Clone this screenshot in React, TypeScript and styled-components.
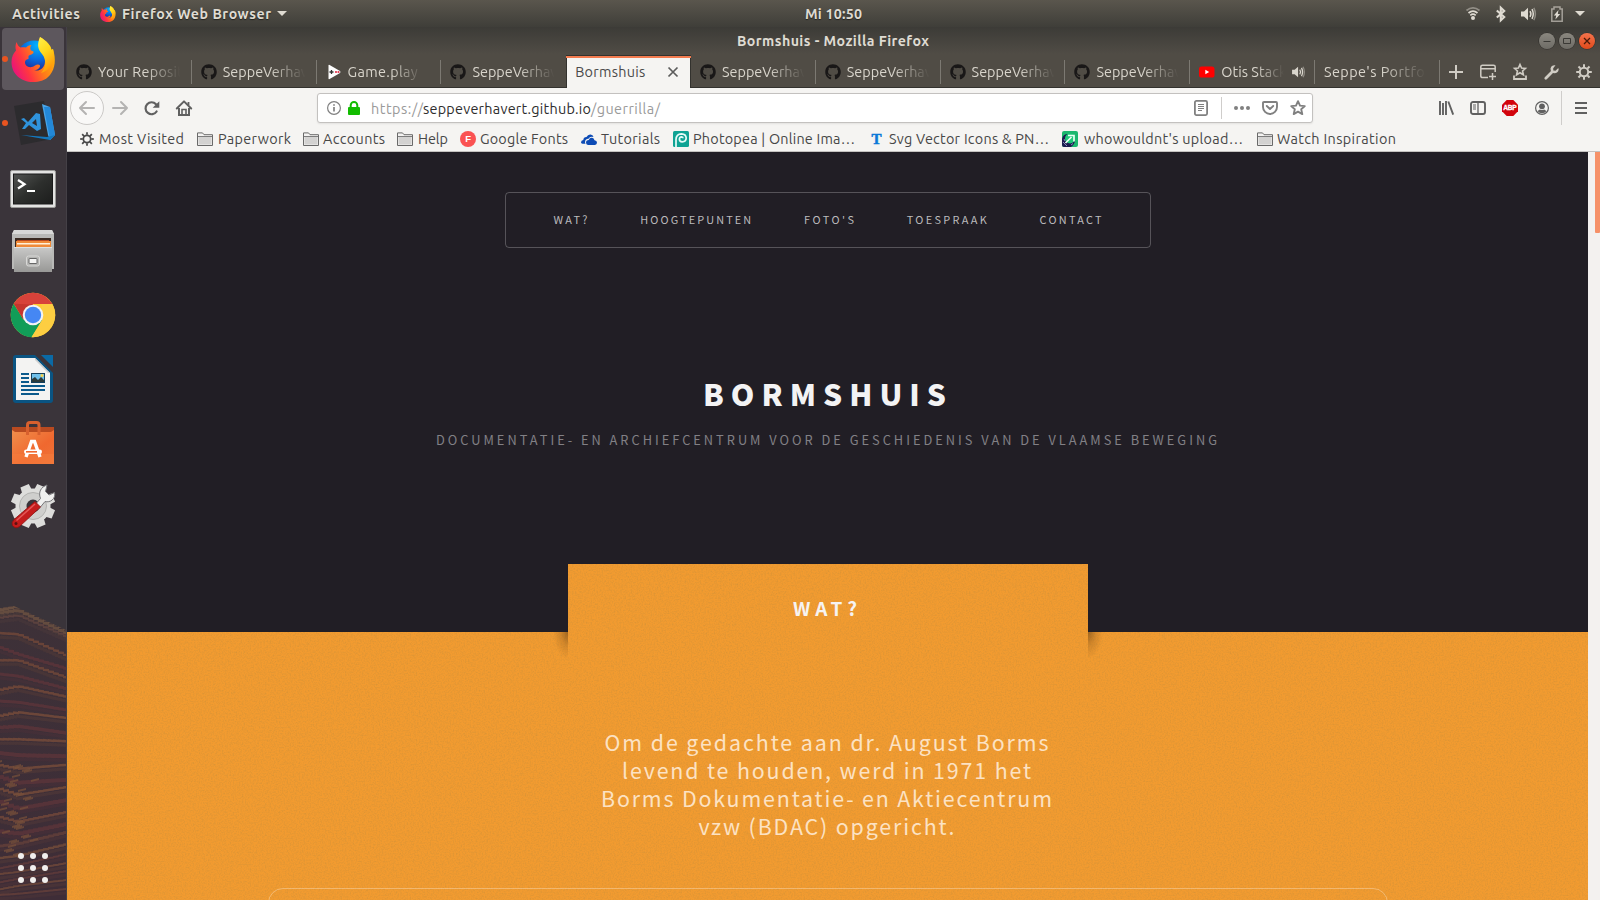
import React, { useLayoutEffect, useRef, useState } from "react";
import styled, { createGlobalStyle, css } from "styled-components";
import { FaGithub } from "react-icons/fa";

const uiFont = `"Ubuntu", "Noto Sans", "Open Sans", sans-serif`;
const pageFont = `"Source Sans Pro", "Noto Sans CJK SC", sans-serif`;

const GlobalStyle = createGlobalStyle`
  * { box-sizing: border-box; }
  html, body { margin: 0; padding: 0; overflow: hidden; }
  svg { display: block; flex: none; overflow: visible; }
`;

/* ---------- text fitted to a column width by tracking ---------- */

const FitBox = styled.span<{ $w: number }>`
  display: block;
  flex: none;
  width: ${(p) => p.$w}px;
  white-space: pre;
`;

function Fit({ w, children }: { w: number; children: string }) {
  const ref = useRef<HTMLSpanElement>(null);
  const [tracking, setTracking] = useState(0);
  useLayoutEffect(() => {
    const el = ref.current;
    if (!el) return;
    const natural = el.getBoundingClientRect().width;
    setTracking((w - natural) / Math.max(1, children.length - 1));
  }, []);
  return (
    <FitBox $w={w}>
      <span ref={ref} style={{ letterSpacing: tracking }}>{children}</span>
    </FitBox>
  );
}

/* ---------- desktop shell ---------- */

const Desktop = styled.div`
  width: 1600px;
  height: 900px;
  display: flex;
  flex-direction: column;
  overflow: hidden;
  background: #3a353a;
  font-family: ${uiFont};
`;

const TopBar = styled.header`
  height: 27px;
  flex: none;
  display: grid;
  grid-template-columns: 805px 1fr auto;
  align-items: center;
  padding-right: 15px;
  background: linear-gradient(#5a564d, #3f3e39);
  color: #dfdbd2;
  font-size: 14.2px;
  font-weight: 700;
  line-height: 26px;
  text-shadow: 0 1px 1px rgba(0, 0, 0, 0.5);
`;

const TopLeft = styled.div`
  display: flex;
  align-items: center;
  padding-left: 12px;
`;

const AppMenu = styled.div`
  display: flex;
  align-items: center;
  gap: 6px;
  margin-left: 20px;
`;

const Tray = styled.div`
  display: flex;
  align-items: center;
  color: #dfdbd2;
`;

const Body = styled.div`
  flex: 1;
  display: flex;
  min-height: 0;
`;

const Dock = styled.nav`
  width: 67px;
  flex: none;
  position: relative;
  display: flex;
  flex-direction: column;
  background: #3a343a;
  border-right: 1px solid #444046;
`;

const DockItem = styled.div<{ $active?: boolean; $drop?: number; $lift?: number }>`
  width: 62px;
  height: 62px;
  margin: 1px 0 1px 2px;
  padding-top: ${(p) => p.$drop ?? 0}px;
  padding-bottom: ${(p) => p.$lift ?? 0}px;
  display: flex;
  align-items: center;
  justify-content: center;
  position: relative;
  border-radius: 4px;
  ${(p) => p.$active && css`background: #5d575d;`}
`;

const RunDot = styled.i`
  position: absolute;
  left: 0;
  top: 28px;
  width: 6px;
  height: 6px;
  border-radius: 50%;
  background: #e95420;
`;

const Wallpaper = styled.svg`
  position: absolute;
  left: 0;
  bottom: 0;
`;

const AppGrid = styled.div`
  position: relative;
  margin: auto 0 17px 18px;
  display: grid;
  grid-template-columns: repeat(3, 6px);
  gap: 6px;
`;

const GridDot = styled.i`
  width: 6px;
  height: 6px;
  border-radius: 50%;
  background: #f1efed;
`;

/* ---------- browser window ---------- */

const Window = styled.main`
  flex: 1;
  min-width: 0;
  display: flex;
  flex-direction: column;
`;

const Chrome = styled.div`
  height: 61px;
  flex: none;
  background: linear-gradient(#3c3b37 0, #504c45 27px, #504c45 100%);
  border-bottom: 1px solid #33322e;
`;

const TitleBar = styled.div`
  height: 28px;
  display: flex;
  align-items: center;
  padding: 0 5px 0 670px;
  color: #dfdbd2;
  font-size: 14.2px;
  font-weight: 700;
  line-height: 27px;
`;

const WindowButtons = styled.div`
  display: flex;
  gap: 4px;
  margin-left: auto;
`;

const WinBtn = styled.div<{ $close?: boolean }>`
  width: 16px;
  height: 16px;
  border-radius: 50%;
  background: ${(p) => (p.$close ? "linear-gradient(#f4734c, #df4a1b)" : "linear-gradient(#8a877f, #6e6c66)")};
  box-shadow: 0 0 0 0.6px #2f2e2a;
`;

const TabStrip = styled.div`
  height: 32px;
  display: flex;
  align-items: stretch;
`;

const Tab = styled.div<{ $active?: boolean; $line?: boolean }>`
  width: 124.8px;
  flex: none;
  display: flex;
  align-items: center;
  gap: 6px;
  padding: 2px 0 0 9px;
  position: relative;
  color: ${(p) => (p.$active ? "#4a4a4a" : "#d9d5cc")};
  font-size: 14.4px;
  line-height: 20px;
  ${(p) =>
    p.$active &&
    css`
      height: 33px;
      margin-top: 0;
      padding: 0 0 2px 9px;
      background: #f5f4f2;
      border-top: 3px solid #f37b4f;
      border-image: linear-gradient(#33322e 0 1px, #f37b4f 1px 3px, #f5f4f2 3px) 3 0 0 0;
      box-shadow: inset 1px 0 #33322e, inset -1px 0 #33322e;
    `}
  ${(p) =>
    p.$line &&
    css`
      background: linear-gradient(#7c7972, #7c7972) right 0 top 5px / 1px 24px no-repeat;
    `}
`;

const TabText = styled.div`
  mask-image: linear-gradient(90deg, #000 55%, transparent 97%);
`;

const StripTools = styled.div`
  flex: 1;
  display: flex;
  align-items: center;
  justify-content: space-between;
  padding: 2px 8px 0 9px;
  color: #d0ccc4;
`;

const NavBar = styled.div`
  height: 38px;
  flex: none;
  display: flex;
  align-items: center;
  padding: 2px 13px 0 3px;
  background: #f5f4f2;
  color: #606060;
`;

const BackBtn = styled.div`
  width: 34px;
  height: 34px;
  border: 1px solid #cbc9c7;
  border-radius: 50%;
  background: #f9f8f7;
  display: grid;
  place-items: center;
  color: #b4b3b2;
`;

const NavIcons = styled.div`
  display: flex;
  align-items: center;
  gap: 16px;
  margin-left: 8px;
`;

const UrlBar = styled.div`
  width: 996px;
  height: 30px;
  margin-left: 125px;
  display: flex;
  align-items: center;
  padding: 0 6px 0 9px;
  background: #fff;
  border: 1px solid #c3c1bf;
  border-radius: 3px;
  box-shadow: 0 1px 2px rgba(0, 0, 0, 0.08);
  color: #808080;
`;

const UrlText = styled.div`
  display: flex;
  margin: 1px 0 0 11px;
  font-size: 14.4px;
  line-height: 20px;
  color: #9a9a9a;
  b { font-weight: 400; color: #2e2e2e; }
`;

const UrlActions = styled.div`
  display: flex;
  align-items: center;
  gap: 12px;
  margin-left: auto;
`;

const VLine = styled.i<{ $h: number }>`
  width: 1px;
  height: ${(p) => p.$h}px;
  background: #cfcdcb;
`;

const RightTools = styled.div`
  display: flex;
  align-items: center;
  gap: 16px;
  margin-left: auto;
`;

const MenuSlot = styled.div`
  display: flex;
  align-items: center;
  gap: 13px;
  margin-left: -4px;
`;

const Bookmarks = styled.div`
  height: 26px;
  flex: none;
  display: flex;
  align-items: center;
  padding: 1px 0 0 13px;
  background: #f5f4f2;
  border-bottom: 1px solid #c4c2c0;
  color: #474747;
  font-size: 14.4px;
  line-height: 22px;
`;

const Bookmark = styled.div<{ $gap: number; $after: number }>`
  display: flex;
  align-items: center;
  gap: ${(p) => p.$gap}px;
  margin-right: ${(p) => p.$after}px;
`;

/* ---------- web page ---------- */

const Viewport = styled.div`
  flex: 1;
  min-height: 0;
  display: flex;
`;

const Scrollbar = styled.div`
  width: 12px;
  flex: none;
  background: #f3f1ef;
  display: flex;
  justify-content: flex-end;
`;

const Thumb = styled.div`
  width: 5px;
  height: 81px;
  background: #f69168;
  border-radius: 0 0 1px 1px;
`;

const Page = styled.div`
  width: 1521px;
  flex: none;
  display: flex;
  flex-direction: column;
  font-family: ${pageFont};
  overflow: hidden;
`;

const Hero = styled.section`
  height: 480px;
  flex: none;
  display: flex;
  flex-direction: column;
  align-items: center;
  padding-top: 40px;
  background: #211e25;
`;

const SiteNav = styled.nav`
  width: 646px;
  height: 56px;
  display: flex;
  align-items: center;
  justify-content: space-between;
  padding: 0 48px 2px 48px;
  border: 1px solid rgba(255, 255, 255, 0.24);
  border-radius: 4px;
  color: #bcbbbd;
  font-size: 10.9px;
  line-height: 20px;
`;

const HeroTitle = styled.h1`
  margin: 123px 6px 0 0;
  font-size: 30px;
  line-height: 44px;
  font-weight: 900;
  color: #f3f3f4;
`;

const HeroSub = styled.p`
  margin: 15px 2px 0 0;
  font-size: 12.8px;
  line-height: 20px;
  font-weight: 400;
  color: #828085;
`;

const Section = styled.section`
  flex: 1;
  min-height: 0;
  position: relative;
  display: flex;
  flex-direction: column;
  align-items: center;
  background: #f29b30;
`;

const Grain = styled.svg`
  position: absolute;
  inset: 0;
  width: 100%;
  height: 100%;
`;

const SectionHead = styled.header`
  position: relative;
  width: 520px;
  height: 94px;
  flex: none;
  margin-top: -68px;
  padding-top: 29px;
  display: flex;
  justify-content: center;
  background: #f29b30;
`;

const Shade = styled.i<{ $right?: boolean }>`
  position: absolute;
  top: 68px;
  width: 15px;
  height: 26px;
  ${(p) => (p.$right ? "left: 100%;" : "right: 100%;")}
  background: radial-gradient(
    ellipse 15px 27px at ${(p) => (p.$right ? "0" : "100%")} 0,
    rgba(60, 35, 10, 0.45),
    rgba(60, 35, 10, 0.16) 50%,
    transparent
  );
`;

const SectionTitle = styled.h2`
  position: relative;
  margin: 0 5px 0 0;
  font-size: 19px;
  line-height: 30px;
  font-weight: 700;
  color: #f6f3f2;
`;

const Lead = styled.div`
  position: relative;
  display: flex;
  flex-direction: column;
  align-items: center;
  margin: 70px 2px 0 0;
  font-size: 21.4px;
  line-height: 28px;
  font-weight: 400;
  color: #fce2c3;
`;

const Panel = styled.div`
  position: relative;
  width: 1120px;
  height: 60px;
  flex: none;
  margin-top: 48px;
  border: 1.5px solid rgba(255, 255, 255, 0.3);
  border-radius: 15px;
`;

/* ---------- icons ---------- */

const FirefoxIcon = ({ size }: { size: number }) => (
  <svg width={size} height={size} viewBox="0 0 45 45">
    <defs>
      <linearGradient id="ffBody" x1="0" y1="0.7" x2="1" y2="0.2">
        <stop offset="0" stopColor="#e8127d" />
        <stop offset="0.28" stopColor="#ff3740" />
        <stop offset="0.55" stopColor="#ff7a1a" />
        <stop offset="1" stopColor="#ffc400" />
      </linearGradient>
      <linearGradient id="ffTail" x1="0" y1="0" x2="0.4" y2="1">
        <stop offset="0" stopColor="#fff14a" />
        <stop offset="0.5" stopColor="#ffd91c" />
        <stop offset="1" stopColor="#ff9a0a" />
      </linearGradient>
      <radialGradient id="ffGlobe" cx="0.6" cy="0.15" r="0.9">
        <stop offset="0" stopColor="#00b4ff" />
        <stop offset="0.5" stopColor="#0a68dc" />
        <stop offset="1" stopColor="#2b1479" />
      </radialGradient>
    </defs>
    <circle cx="23" cy="20" r="16.5" fill="url(#ffGlobe)" />
    <path fill="url(#ffBody)" d="M5.5 5C6.5 8 8 10 9.5 10.5C11 10 13 10 15 10.5C16.5 9 18 8.2 20.5 8C19 10 19 12 20 13.5C21.5 14 23 14.3 22.5 15.5C22 17.5 18 18 17.5 19L17.5 22C14 22.5 13.5 25 14.5 27.5C16.5 31 21 31 24 28.6C26 27 28 27 29 28.5C29.4 30.5 27 33 23 33.5C31 34.5 34 29 34 24C34 16 27 14 29 0C36 4 40 9 40.5 13L42 12C45 22 44.5 31 39 38C34 44 28 45 22 45C10 45 0.5 37 0.5 25C0.5 20 2.5 16 5 13.5C4 10 4.600 8 5.500 5Z" />
    <path fill="url(#ffTail)" d="M29 0C26 7 26.500 12 31 17C36 23 35 31 30 36C38 34 44 26 43 18L42 12L40.500 13C40 9 36 4 29 0Z" />
  </svg>
);

const CodeIcon = () => (
  <svg width="42" height="44" viewBox="0 0 42 44">
    <path d="M0 5L30 0L38 38L7 44Z" fill="#2c2b2e" />
    <path d="M28 3L36 6L41 34L36 39L34 34Z" fill="#4aa5e8" />
    <path d="M30 6L36 6L41 34L36 39Z" fill="#2388d8" />
    <path d="M7 34L33 36L41 34L36 39Z" fill="#1478be" />
    <path d="M7 18L10 17L14 21L22 12L26 13L27 28L23 30L15 24L11 28L8 28L12 22ZM22 18L18 22L23 25Z" fill="#2f93dc" fillRule="evenodd" />
  </svg>
);

const TerminalIcon = () => (
  <svg width="46" height="38" viewBox="0 0 46 38">
    <defs>
      <linearGradient id="tmScreen" x1="0" y1="0" x2="1" y2="1">
        <stop offset="0" stopColor="#525452" />
        <stop offset="0.5" stopColor="#2d2f2d" />
        <stop offset="1" stopColor="#1c1d1c" />
      </linearGradient>
    </defs>
    <rect x="0.500" y="0.500" width="45" height="37" rx="1.500" fill="#e3e3e2" stroke="#9a9a98" />
    <rect x="3.500" y="4" width="39" height="30" fill="url(#tmScreen)" stroke="#1a1a1a" />
    <path d="M8 10L14.500 14.200L8 18.500" fill="none" stroke="#fff" strokeWidth="2.300" />
    <path d="M17 21H25" stroke="#fff" strokeWidth="2" />
  </svg>
);

const FilesIcon = () => (
  <svg width="42" height="43" viewBox="0 0 42 43">
    <defs>
      <linearGradient id="flBox" x1="0" y1="0" x2="0" y2="1">
        <stop offset="0" stopColor="#c9c9c8" />
        <stop offset="1" stopColor="#989896" />
      </linearGradient>
    </defs>
    <path d="M2 0H40L42 4V39H0V4Z" fill="#b9b9b7" />
    <path d="M2 0H40L42 4H0Z" fill="#d8d8d7" />
    <rect x="3" y="8" width="36" height="12" fill="#3a2a22" />
    <rect x="5" y="10" width="32" height="2" fill="#bb4a20" />
    <rect x="4" y="11" width="35" height="9" fill="#f08a38" />
    <rect x="5" y="13" width="33" height="1.500" fill="#fff0d8" />
    <path d="M2 17H40V42H2Z" fill="url(#flBox)" />
    <rect x="2" y="17" width="38" height="1" fill="#e2e2e1" />
    <rect x="14.500" y="26" width="13" height="10" rx="2" fill="#b6b6b4" stroke="#d8d8d6" />
    <rect x="17" y="28.500" width="8" height="5" rx="0.500" fill="#f4f4f3" stroke="#666" />
  </svg>
);

const ChromeIcon = () => (
  <svg width="45" height="45" viewBox="0 0 45 45">
    <circle cx="22" cy="22" r="22.300" fill="#fc3" />
    <g transform="translate(-0.500 -0.500)">
      <path d="M22.500 22.500L3.200 11.350A22.300 22.300 0 0 1 41.800 11.500H22.500Z" fill="#d8423a" />
      <path d="M3.200 11.350A22.300 22.300 0 0 0 21 44.750L31.500 27.500L22.500 22.500L13 27Z" fill="#119d58" />
      <path d="M41.800 11.500A22.300 22.300 0 0 1 21 44.750L32 27.500L31 11.500Z" fill="#fdce42" />
      <path d="M3.200 11.350L12.800 27L22 12Z" fill="#c5352e" />
      <circle cx="22.500" cy="22.500" r="10.300" fill="#f3f3f3" />
      <circle cx="22.500" cy="22.500" r="8.200" fill="#4587f3" />
    </g>
  </svg>
);

const WriterIcon = () => (
  <svg width="40" height="48" viewBox="0 0 40 48">
    <path d="M3 0H22L40 18V45Q40 48 37 48H3Q0 48 0 45V3Q0 0 3 0Z" fill="#0a5482" />
    <path d="M28 0H40V12Z" fill="#0b6aa5" />
    <path d="M3 3H22L37 18V45H3Z" fill="#f3f3f2" />
    <path d="M22 3L37 18H35L22 5Z" fill="#cfcfce" />
    <path d="M8 19H16M8 23H16M8 27H16M8 31H32M8 35H32M8 39H26" stroke="#0b5a8c" strokeWidth="2" />
    <rect x="18.500" y="18.500" width="13" height="9" fill="#6fc0ea" stroke="#14405c" />
    <path d="M19 27V24L22 22L25 25L28 22L31 25V27Z" fill="#2c3b3b" />
    <circle cx="29" cy="20.500" r="1.500" fill="#f5d04a" />
  </svg>
);

const SoftwareIcon = () => (
  <svg width="42" height="44" viewBox="0 0 42 44">
    <defs>
      <linearGradient id="swBag" x1="0" y1="0" x2="1" y2="1">
        <stop offset="0" stopColor="#f08f4c" />
        <stop offset="0.600" stopColor="#f0682f" />
        <stop offset="1" stopColor="#ee7437" />
      </linearGradient>
    </defs>
    <path d="M0 6H42V12H0Z" fill="#b84a20" />
    <path d="M0 9L3 11H39L42 9V43H0Z" fill="url(#swBag)" />
    <path d="M15.500 14V4Q15.500 1.500 18 1.500H24.500Q27 1.500 27 4V14" fill="none" stroke="#d8602e" strokeWidth="3" />
    <path d="M0 33H42V43H0Z" fill="#f57d3e" opacity="0.500" />
    <path d="M14 36L19.500 20.500H22.500L28 36" fill="none" stroke="#fff" strokeWidth="3.400" />
    <rect x="12" y="28.500" width="18" height="4.500" rx="2.200" fill="#fff" />
    <rect x="14" y="30" width="11" height="1.600" fill="#f0682f" />
  </svg>
);

const teeth = Array.from({ length: 8 }, (_, i) => i * 45 + 22.5);

const ToolsIcon = () => (
  <svg width="44" height="44" viewBox="0 0 44 44">
    {teeth.map((a) => (
      <path key={a} d="M16.500 9L17.500 0H26.500L27.500 9Z" fill="#dcdcda" transform={`rotate(${a} 22 22)`} />
    ))}
    <circle cx="22" cy="22" r="17.500" fill="#dededc" />
    <circle cx="22" cy="22" r="13.500" fill="#cfcfcd" stroke="#b3b3b1" strokeWidth="1" />
    <circle cx="22" cy="22" r="6.500" fill="#39343a" />
    <path d="M22 23L29.500 14.500C27 8 30 3 36 1L34.500 7.500L38 11L43.500 8.500C45 15 39 19 34 17.500L27 26Z" fill="#f0f0ef" stroke="#77777a" strokeWidth="1" />
    <path d="M24 17.500L29.500 23L8.500 42.500Q4.500 45.500 1.500 41.500Q0 39 3 35.500Z" fill="#c41c1c" stroke="#8d1010" strokeWidth="0.800" />
    <path d="M24 20L5.500 36.500" stroke="#e45858" strokeWidth="1.500" />
    <circle cx="5" cy="39.500" r="1.500" fill="#5c1010" />
  </svg>
);

const WifiIcon = () => (
  <svg width="14" height="13" viewBox="0 0 14 13" fill="none" stroke="currentColor" strokeWidth="1.700">
    <path d="M0.500 3.500Q7 -1.800 13.500 3.500" opacity="0.450" />
    <path d="M2.500 6Q7 2.200 11.500 6M4.300 8.300Q7 6 9.700 8.300" />
    <circle cx="7" cy="11" r="2" fill="currentColor" stroke="none" />
  </svg>
);

const BluetoothIcon = () => (
  <svg width="10" height="16" viewBox="0 0 10 16" fill="none" stroke="currentColor" strokeWidth="2.100">
    <path d="M0.800 4.500L8.200 11L4.800 14.200V1.800L8.200 5L0.800 11.500" />
  </svg>
);

const VolumeIcon = ({ small }: { small?: boolean }) => (
  <svg width={small ? 13 : 15} height={small ? 12 : 14} viewBox="0 0 15 14" fill="none" stroke="currentColor" strokeWidth="1.500">
    <path d="M0 4.500H3L7 0.800V13.200L3 9.500H0Z" fill="currentColor" stroke="none" />
    <path d="M9 4.200Q10.800 7 9 9.800M11 2.200Q13.500 7 11 11.800" />
    <path d="M12.800 0.800Q16 7 12.800 13.200" opacity="0.450" />
  </svg>
);

const BatteryIcon = () => (
  <svg width="12" height="16" viewBox="0 0 12 16">
    <path d="M3 1H9V3H11.200V15.200H0.800V3H3Z" fill="none" stroke="currentColor" strokeWidth="1.500" opacity="0.600" />
    <path d="M7.500 4L2.800 9.500H5.200L4.400 13.500L9.200 8H6.800Z" fill="currentColor" />
  </svg>
);

const Caret = () => (
  <svg width="10" height="5" viewBox="0 0 10 5"><path d="M0 0H10L5 5Z" fill="currentColor" /></svg>
);

const Github = () => <FaGithub size={16} color="#191717" />;

const GamePlay = () => (
  <svg width="16" height="16" viewBox="0 0 16 16">
    <path d="M2.500 1.500Q2.500 0.500 3.600 1L14 7Q15 8 14 9L3.600 15Q2.500 15.500 2.500 14.500Z" fill="#fff" />
    <path d="M3.500 8H7.500M5.500 6V10" stroke="#333" strokeWidth="1.300" />
    <circle cx="10" cy="8" r="1.100" fill="#e03048" /><circle cx="12.500" cy="8" r="1.100" fill="#e03048" />
  </svg>
);

const YouTube = () => (
  <svg width="16" height="16" viewBox="0 0 16 16">
    <rect x="0" y="2.500" width="15.500" height="11" rx="2.600" fill="#f00" />
    <path d="M6.300 5.700V10.300L10.200 8Z" fill="#fff" />
  </svg>
);

const PlusIcon = () => (
  <svg width="14" height="14" viewBox="0 0 14 14" stroke="currentColor" strokeWidth="2"><path d="M7 0V14M0 7H14" /></svg>
);

const WindowPlus = () => (
  <svg width="16" height="16" viewBox="0 0 16 16" fill="none" stroke="currentColor" strokeWidth="1.500">
    <path d="M8 13.500H2.500Q0.800 13.500 0.800 12V2.800Q0.800 1.300 2.500 1.300H13.500Q15.200 1.300 15.200 2.800V8M1 4.800H15M12.500 9V16M9 12.500H16" />
  </svg>
);

const starPath = "M8 1.200L10 5.600L14.800 6.100L11.200 9.300L12.300 14.100L8 11.600L3.700 14.100L4.800 9.300L1.200 6.100L6 5.600Z";

const StarTray = () => (
  <svg width="14" height="16" viewBox="0 0 14 16" fill="none" stroke="currentColor">
    <path d={starPath} strokeWidth="2" transform="translate(0.600 -0.500) scale(0.800)" />
    <path d="M1 11.500V15H13V11.500" strokeWidth="1.800" />
  </svg>
);

const WrenchIcon = () => (
  <svg width="15" height="15" viewBox="0 0 15 15">
    <path d="M1.800 13.200L8 7" stroke="currentColor" strokeWidth="2.800" strokeLinecap="round" />
    <path d="M11.500 0.300Q7.500 -0.200 6.500 3.500Q6.500 7.500 10 8.300Q14 8.500 14.700 4.500L14.300 3L11.500 5.700L9.300 5.500L9.200 3.300Z" fill="currentColor" />
  </svg>
);

const GearIcon = ({ size }: { size: number }) => (
  <svg width={size} height={size} viewBox="0 0 16 16" fill="none" stroke="currentColor">
    <circle cx="8" cy="8" r="4.200" strokeWidth="2" />
    {[0, 45, 90, 135, 180, 225, 270, 315].map((a) => (
      <path key={a} d="M8 0.200V3.200" strokeWidth="2" transform={`rotate(${a} 8 8)`} />
    ))}
  </svg>
);

const ArrowIcon = ({ flip }: { flip?: boolean }) => (
  <svg width="16" height="14" viewBox="0 0 16 14" fill="none" stroke="#b4b3b2" strokeWidth="2" strokeLinecap="round" strokeLinejoin="round">
    <path d={flip ? "M1 7H15M9 1L15 7L9 13" : "M15 7H1M7 1L1 7L7 13"} />
  </svg>
);

const ReloadIcon = () => (
  <svg width="16" height="15" viewBox="0 0 16 15">
    <path d="M12.600 10.500A6 6 0 1 1 12 3.200" fill="none" stroke="currentColor" strokeWidth="2.200" strokeLinecap="round" />
    <path d="M15.300 0.200V6.800H8.700Z" fill="currentColor" />
  </svg>
);

const HomeIcon = () => (
  <svg width="16" height="16" viewBox="0 0 16 16" fill="none" stroke="currentColor" strokeWidth="2">
    <path d="M0.800 8.500L8 1.400L15.200 8.500" strokeLinecap="round" strokeLinejoin="round" />
    <path d="M3 8V15H13V8" />
    <path d="M6 14V9.500H10V14" strokeWidth="1.600" />
    <path d="M12.500 2V5" strokeWidth="1.800" />
  </svg>
);

const InfoIcon = () => (
  <svg width="14" height="14" viewBox="0 0 14 14" fill="none" stroke="currentColor">
    <circle cx="7" cy="7" r="6.400" strokeWidth="1.200" />
    <path d="M7 6V10.500M7 3.200V4.800" strokeWidth="1.700" />
  </svg>
);

const LockIcon = () => (
  <svg width="12" height="14" viewBox="0 0 12 14">
    <path d="M2.700 7V4.300A3.300 3.300 0 0 1 9.300 4.300V7" fill="none" stroke="#12bc00" strokeWidth="2" />
    <rect x="0" y="6" width="12" height="8" rx="1" fill="#12bc00" />
  </svg>
);

const ReaderIcon = () => (
  <svg width="15" height="16" viewBox="0 0 15 16" fill="none" stroke="currentColor">
    <rect x="0.900" y="0.900" width="12.200" height="14.200" rx="1.500" strokeWidth="1.800" />
    <path d="M4 4.500H10M4 6.500H10M4 8.500H10M4 10.500H8" strokeWidth="1" />
  </svg>
);

const DotsIcon = () => (
  <svg width="16" height="4" viewBox="0 0 16 4" fill="currentColor">
    <circle cx="2" cy="2" r="2" /><circle cx="8" cy="2" r="2" /><circle cx="14" cy="2" r="2" />
  </svg>
);

const PocketIcon = () => (
  <svg width="16" height="14" viewBox="0 0 16 14" fill="none" stroke="currentColor" strokeWidth="1.900" strokeLinecap="round" strokeLinejoin="round">
    <path d="M2 1H14Q15 1 15 2V6A7 7 0 0 1 1 6V2Q1 1 2 1Z" />
    <path d="M4.800 5L8 8L11.200 5" />
  </svg>
);

const StarIcon = () => (
  <svg width="16" height="16" viewBox="0 0 16 16" fill="none" stroke="currentColor" strokeWidth="1.900" strokeLinejoin="round">
    <path d={starPath} />
  </svg>
);

const LibraryIcon = () => (
  <svg width="15" height="14" viewBox="0 0 15 14" stroke="currentColor" strokeWidth="1.900">
    <path d="M1 0V14M4 2V14M7 0V14M9.300 0.500L14.200 13.700" />
  </svg>
);

const SidebarIcon = () => (
  <svg width="16" height="14" viewBox="0 0 16 14" fill="none" stroke="currentColor">
    <rect x="1" y="1" width="14" height="12" rx="2" strokeWidth="1.900" />
    <path d="M8 1V13" strokeWidth="1.300" />
    <path d="M3 4H6M3 6H6M3 8H6" strokeWidth="1" />
  </svg>
);

const AbpText = styled.text`
  font: 700 6.6px "Liberation Sans", sans-serif;
`;

const AbpIcon = () => (
  <svg width="16" height="16" viewBox="0 0 16 16">
    <path d="M4.700 0H11.300L16 4.700V11.300L11.300 16H4.700L0 11.300V4.700Z" fill="#d2040c" />
    <AbpText x="8" y="10.400" textAnchor="middle" textLength="13.500" fill="#fff" stroke="#fff" strokeWidth="0.300">ABP</AbpText>
  </svg>
);

const AccountIcon = () => (
  <svg width="15" height="14" viewBox="-1 0 15 14">
    <circle cx="7" cy="7" r="6.400" fill="none" stroke="currentColor" strokeWidth="1.200" />
    <circle cx="7" cy="5.300" r="2.900" fill="currentColor" />
    <path d="M2.600 10.200Q4 8.600 5 8.400Q7 9.800 9 8.400Q10 8.600 11.400 10.200Q9.800 12.200 7 12.200T2.600 10.200Z" fill="currentColor" />
  </svg>
);

const MenuIcon = () => (
  <svg width="12" height="12" viewBox="0 0 12 12" stroke="currentColor" strokeWidth="1.900"><path d="M0 1H12M0 6H12M0 11H12" /></svg>
);

const FolderIcon = () => (
  <svg width="16" height="14" viewBox="0 0 16 14">
    <path d="M0.500 13.500V0.900H5.500L7 2.700H15.500V13.500Z" fill="#f3f2f1" stroke="#6a6a6a" />
    <path d="M1.500 5H14.500V12.500H1.500Z" fill="#d3d2d1" />
    <path d="M1 4.500H15" stroke="#7d7d7d" />
  </svg>
);

const FIconText = styled.text`
  font: 700 9.5px "Liberation Sans", sans-serif;
`;

const FontsIcon = () => (
  <svg width="16" height="16" viewBox="0 0 16 16">
    <circle cx="8" cy="8" r="8" fill="#fa5252" />
    <FIconText x="8.200" y="11.400" textAnchor="middle" fill="#fff">F</FIconText>
  </svg>
);

const CloudIcon = () => (
  <svg width="16" height="11" viewBox="0 0 16 11" fill="#0d4bb5">
    <path d="M0 8.500Q0 6.300 2.300 6Q2.500 3 5.500 3Q6.800 0.300 9.500 0.500Q12 0.800 12.500 3Q9 1.800 7.500 4.800Q4 4.800 4 8.500L4.500 9.800H1.500Q0 9.500 0 8.500Z" />
    <path d="M5 8.600Q5 6.200 7.800 6Q8.600 3.500 11 3.800Q13 4 13.500 6.300Q16 6.600 16 8.800Q15.800 10.800 14 10.900H7Q5 10.700 5 8.600Z" />
  </svg>
);

const PhotopeaIcon = () => (
  <svg width="16" height="16" viewBox="0 0 16 16">
    <rect width="16" height="16" rx="1.500" fill="#0fa394" />
    <path d="M3 16V8.500Q3.200 3 8.500 2.800Q13 3 13.200 7Q13 10.800 9.300 10.900Q6.300 10.700 6.400 8Q6.600 5.800 8.600 5.800Q10 6 9.900 7.300" fill="none" stroke="#e6fbf8" strokeWidth="1.700" />
  </svg>
);

const TIconText = styled.text`
  font: 700 15px "Liberation Serif", serif;
`;

const TIcon = () => (
  <svg width="11" height="16" viewBox="0 0 11 16">
    <TIconText x="5.500" y="13" textAnchor="middle" fill="#0a78d8" stroke="#0a78d8" strokeWidth="0.500">T</TIconText>
  </svg>
);

const UploadIcon = () => (
  <svg width="16" height="16" viewBox="0 0 16 16">
    <rect width="16" height="16" rx="2" fill="#1bb76e" />
    <path d="M0 8Q1 3 6 3L9 3L13 9Q13 13 9 16H2Q0 16 0 14Z" fill="#1c1c50" />
    <circle cx="8" cy="7.500" r="5" fill="#1fc878" />
    <path d="M3.500 12L9.500 6M6 4.500H12V10.500" stroke="#e9fff4" strokeWidth="1.700" fill="none" />
    <path d="M1 11L5 15M2 8L3 10M9 14L11 12.500" stroke="#b9b9e8" strokeWidth="0.700" />
  </svg>
);

/* ---------- dune wallpaper behind the dock ---------- */

const ridges: [number, number, number, string, number][] = [
  [3, 0, 24, "#735844", 3], [6, 4, 28, "#6b5141", 3], [11, 9, 31, "#604440", 2],
  [27, 28, 50, "#734838", 2.5], [42, 48, 63, "#5d343a", 3], [54, 54, 72, "#734838", 2.500],
  [68, 70, 83, "#5d343a", 3], [83, 80, 91, "#764a38", 2.500], [95, 96, 104, "#5d343a", 3],
  [109, 106, 112, "#784c39", 2.500], [121, 120, 127, "#5d343a", 3.500], [133, 133, 135, "#784c39", 2.500],
  [147, 149, 150, "#5d343a", 4], [160, 163, 159, "#784c39", 2.500], [172, 177, 174, "#5d343a", 4],
  [184, 189, 181, "#784c39", 2.500], [197, 203, 194, "#5d343a", 4], [212, 216, 206, "#744939", 2.500],
  [226, 228, 218, "#5d343a", 4], [240, 238, 226, "#64403a", 3], [252, 250, 238, "#744c39", 2.500],
  [262, 259, 248, "#623b3a", 2], [268, 266, 257, "#704839", 2], [276, 273, 265, "#623b3a", 2],
  [283, 280, 274, "#704839", 2], [289, 288, 283, "#66403a", 2],
];

/* a ridge descends in short slabs, each a few pixels long */
const ridgePath = (a: number, b: number, c: number, step: number) => {
  let d = "";
  for (let x = -2; x < 68; x += step) {
    const y = x < 16 ? a + ((b - a) * x) / 16 : b + ((c - b) * (x - 16)) / 50;
    d += `M${x} ${y.toFixed(1)}l${step + 1} ${c > b ? 0.6 : -0.6}`;
  }
  return d;
};

const clumps = Array.from({ length: 42 }, (_, i) => {
  const row = Math.floor(i / 3);
  return { x: ((i * 17) % 23) + (row % 3) * 4 - 6 + (i % 3) * 4, y: 156 + row * 7 + ((i * 5) % 6) };
});

const Dunes = () => (
  <Wallpaper width="66" height="294" viewBox="0 0 66 294">
    <defs>
      <linearGradient id="duneFill" x1="0" y1="0" x2="0" y2="1">
        <stop offset="0" stopColor="#3d3138" />
        <stop offset="1" stopColor="#3e2d37" />
      </linearGradient>
      <clipPath id="duneClip"><path d="M0 2L14 0L66 24V294H0Z" /></clipPath>
    </defs>
    <g clipPath="url(#duneClip)">
      <rect width="66" height="294" fill="url(#duneFill)" />
      {ridges.map(([a, b, c, color, w], i) => (
        <g key={i} fill="none" stroke={color}>
          <path d={ridgePath(a, b, c, 5)} strokeWidth={w} opacity="0.800" />
          <path d={ridgePath(a + 4, b + 4, c + 4, 3)} strokeWidth="3" opacity="0.220" />
        </g>
      ))}
      {clumps.map((c, i) => (
        <path key={i} d={`M${c.x} ${c.y}l8 -2v2l-8 2z`} fill="#77503b" opacity="0.700" />
      ))}
    </g>
  </Wallpaper>
);

/* ---------- data ---------- */

type TabData = { icon?: React.ReactNode; text: string; w: number; active?: boolean; sound?: boolean };

const tabs: TabData[] = [
  { icon: <Github />, text: "Your Reposit", w: 85 },
  { icon: <Github />, text: "SeppeVerhav", w: 85 },
  { icon: <GamePlay />, text: "Game.play |", w: 78 },
  { icon: <Github />, text: "SeppeVerhav", w: 85 },
  { text: "Bormshuis", w: 70, active: true },
  { icon: <Github />, text: "SeppeVerhav", w: 85 },
  { icon: <Github />, text: "SeppeVerhav", w: 85 },
  { icon: <Github />, text: "SeppeVerhav", w: 85 },
  { icon: <Github />, text: "SeppeVerhav", w: 85 },
  { icon: <YouTube />, text: "Otis Stack", w: 65, sound: true },
  { text: "Seppe's Portfol", w: 105 },
];

const bookmarks: { icon: React.ReactNode; text: string; w: number; gap: number; after: number }[] = [
  { icon: <GearIcon size={14} />, text: "Most Visited", w: 85, gap: 5, after: 13 },
  { icon: <FolderIcon />, text: "Paperwork", w: 73, gap: 5, after: 12 },
  { icon: <FolderIcon />, text: "Accounts", w: 62, gap: 4, after: 12 },
  { icon: <FolderIcon />, text: "Help", w: 30, gap: 5, after: 12 },
  { icon: <FontsIcon />, text: "Google Fonts", w: 88, gap: 4, after: 13 },
  { icon: <CloudIcon />, text: "Tutorials", w: 59, gap: 4, after: 13 },
  { icon: <PhotopeaIcon />, text: "Photopea | Online Ima…", w: 162, gap: 4, after: 16 },
  { icon: <TIcon />, text: "Svg Vector Icons & PN…", w: 160, gap: 7, after: 13 },
  { icon: <UploadIcon />, text: "whowouldnt's upload…", w: 159, gap: 6, after: 14 },
  { icon: <FolderIcon />, text: "Watch Inspiration", w: 119, gap: 4, after: 0 },
];

const navLinks: [string, number][] = [["WAT?", 34], ["HOOGTEPUNTEN", 111], ["FOTO'S", 50], ["TOESPRAAK", 80], ["CONTACT", 62]];

const leadLines: [string, number][] = [
  ["Om de gedachte aan dr. August Borms", 444],
  ["levend te houden, werd in 1971 het", 409],
  ["Borms Dokumentatie- en Aktiecentrum", 451],
  ["vzw (BDAC) opgericht.", 256],
];

const Spacer = styled.i<{ $w: number }>`
  width: ${(p) => p.$w}px;
  flex: none;
`;

export default function App() {
  return (
    <Desktop>
      <GlobalStyle />
      <TopBar>
        <TopLeft>
          <Fit w={68}>Activities</Fit>
          <AppMenu>
            <FirefoxIcon size={16} />
            <Fit w={149}>Firefox Web Browser</Fit>
            <Caret />
          </AppMenu>
        </TopLeft>
        <Fit w={57}>Mi 10:50</Fit>
        <Tray>
          <WifiIcon /><Spacer $w={16} />
          <BluetoothIcon /><Spacer $w={15} />
          <VolumeIcon /><Spacer $w={15} />
          <BatteryIcon /><Spacer $w={12} />
          <Caret />
        </Tray>
      </TopBar>
      <Body>
        <Dock>
          <Dunes />
          <DockItem $active><RunDot /><FirefoxIcon size={45} /></DockItem>
          <DockItem><RunDot /><Spacer $w={4} /><CodeIcon /></DockItem>
          <DockItem $drop={3}><TerminalIcon /></DockItem>
          <DockItem><FilesIcon /></DockItem>
          <DockItem><ChromeIcon /></DockItem>
          <DockItem><WriterIcon /></DockItem>
          <DockItem><SoftwareIcon /></DockItem>
          <DockItem $lift={2}><ToolsIcon /></DockItem>
          <AppGrid>{Array.from({ length: 9 }, (_, i) => <GridDot key={i} />)}</AppGrid>
        </Dock>
        <Window>
          <Chrome>
            <TitleBar>
              <Fit w={192}>Bormshuis - Mozilla Firefox</Fit>
              <WindowButtons>
                <WinBtn><svg width="16" height="16" stroke="#3a3935" fill="none"><path d="M4.500 8.500H11.500" /></svg></WinBtn>
                <WinBtn><svg width="16" height="16" stroke="#3a3935" fill="none"><path d="M4.500 5.500H11.500V10.500H4.500Z" /></svg></WinBtn>
                <WinBtn $close><svg width="16" height="16" stroke="#4a1a08" strokeWidth="1.300"><path d="M5 5L11 11M11 5L5 11" /></svg></WinBtn>
              </WindowButtons>
            </TitleBar>
            <TabStrip>
              {tabs.map((t, i) => (
                <Tab key={i} $active={t.active} $line={!t.active && i !== 3}>
                  {t.icon}
                  {t.active ? (
                    <>
                      <Fit w={t.w}>{t.text}</Fit>
                      <Spacer $w={11} />
                      <svg width="10" height="10" stroke="#5c5c5c" strokeWidth="1.700"><path d="M0.500 0.500L9.500 9.500M9.500 0.500L0.500 9.500" /></svg>
                    </>
                  ) : (
                    <TabText><Fit w={t.w}>{t.text}</Fit></TabText>
                  )}
                  {t.sound && <VolumeIcon small />}
                </Tab>
              ))}
              <StripTools>
                <PlusIcon /><WindowPlus /><StarTray /><WrenchIcon /><GearIcon size={16} />
              </StripTools>
            </TabStrip>
          </Chrome>
          <NavBar>
            <BackBtn><ArrowIcon /></BackBtn>
            <NavIcons>
              <ArrowIcon flip /><ReloadIcon /><HomeIcon />
            </NavIcons>
            <UrlBar>
              <InfoIcon /><Spacer $w={7} /><LockIcon />
              <UrlText>
                <Fit w={52}>https://</Fit>
                <b><Fit w={168}>seppeverhavert.github.io</Fit></b>
                <Fit w={69}>/guerrilla/</Fit>
              </UrlText>
              <UrlActions>
                <ReaderIcon /><VLine $h={22} /><DotsIcon /><PocketIcon /><StarIcon />
              </UrlActions>
            </UrlBar>
            <RightTools>
              <LibraryIcon /><SidebarIcon /><AbpIcon /><AccountIcon />
              <MenuSlot><VLine $h={34} /><MenuIcon /></MenuSlot>
            </RightTools>
          </NavBar>
          <Bookmarks>
            {bookmarks.map((b) => (
              <Bookmark key={b.text} $gap={b.gap} $after={b.after}>
                {b.icon}
                <Fit w={b.w}>{b.text}</Fit>
              </Bookmark>
            ))}
          </Bookmarks>
          <Viewport>
            <Page>
              <Hero>
                <SiteNav>{navLinks.map(([t, w]) => <Fit key={t} w={w}>{t}</Fit>)}</SiteNav>
                <HeroTitle><Fit w={243}>BORMSHUIS</Fit></HeroTitle>
                <HeroSub><Fit w={781}>DOCUMENTATIE- EN ARCHIEFCENTRUM VOOR DE GESCHIEDENIS VAN DE VLAAMSE BEWEGING</Fit></HeroSub>
              </Hero>
              <Section>
                <Grain>
                  <filter id="grain" x="0" y="0" width="100%" height="100%">
                    <feTurbulence type="fractalNoise" baseFrequency="0.65" numOctaves="3" seed="4" />
                    <feColorMatrix values="0 0 0 0 0.350  0 0 0 0 0.220  0 0 0 0 0.050  0.500 0 0 0 -0.190" />
                  </filter>
                  <rect width="100%" height="100%" filter="url(#grain)" />
                </Grain>
                <SectionHead>
                  <Shade /><Shade $right />
                  <Grain><rect width="100%" height="100%" filter="url(#grain)" /></Grain>
                  <SectionTitle><Fit w={64}>WAT?</Fit></SectionTitle>
                </SectionHead>
                <Lead>{leadLines.map(([t, w]) => <Fit key={t} w={w}>{t}</Fit>)}</Lead>
                <Panel />
              </Section>
            </Page>
            <Scrollbar><Thumb /></Scrollbar>
          </Viewport>
        </Window>
      </Body>
    </Desktop>
  );
}
